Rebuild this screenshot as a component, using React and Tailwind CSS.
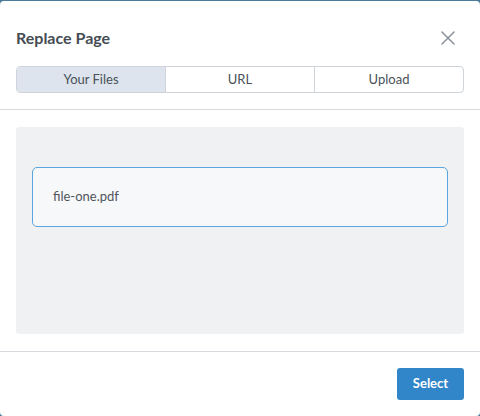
export default function App() {
  return (
    <div className="w-[480px] h-[416px] bg-[#4b7a99] pt-px" style={{ fontFamily: "Lato, 'Liberation Sans', sans-serif" }}>
      <div className="w-[480px] h-[415px] bg-white rounded-[4px] flex flex-col">
        <div className="px-4 pt-[26px] h-[109px] border-b border-[#d6dadf]">
          <div className="flex items-center justify-between h-[22px]">
            <div className="text-[16px] font-bold text-[#454c53]">Replace Page</div>
            <svg width="14" height="14" viewBox="0 0 14 14" className="mr-[9px]">
              <path d="M1 1 L13 13 M13 1 L1 13" stroke="#8a9097" strokeWidth="1.5" strokeLinecap="round" />
            </svg>
          </div>
          <div className="mt-[17px] flex h-[27px] border border-[#cfd4da] rounded-[4px] overflow-hidden text-[13px] text-[#4a5158]">
            <div className="flex-1 flex items-center justify-center bg-[#dde4ed]">Your Files</div>
            <div className="flex-1 flex items-center justify-center border-l border-[#cfd4da]">URL</div>
            <div className="flex-1 flex items-center justify-center border-l border-[#cfd4da]">Upload</div>
          </div>
        </div>
        <div className="px-4 pt-[17px] pb-[17px] border-b border-[#d6dadf]">
          <div className="h-[207px] bg-[#f0f1f3] rounded-[3px] px-4 pt-[40px]">
            <div className="h-[60px] border border-[#5ba6de] rounded-[5px] bg-[#f7f8fa] flex items-center pl-5 text-[13px] text-[#4f555b]">
              file-one.pdf
            </div>
          </div>
        </div>
        <div className="flex justify-end px-4 pt-[16px]">
          <button className="w-[67px] h-[32px] rounded-[3px] bg-[#3185c9] text-white text-[13px] font-bold">Select</button>
        </div>
      </div>
    </div>
  );
}
